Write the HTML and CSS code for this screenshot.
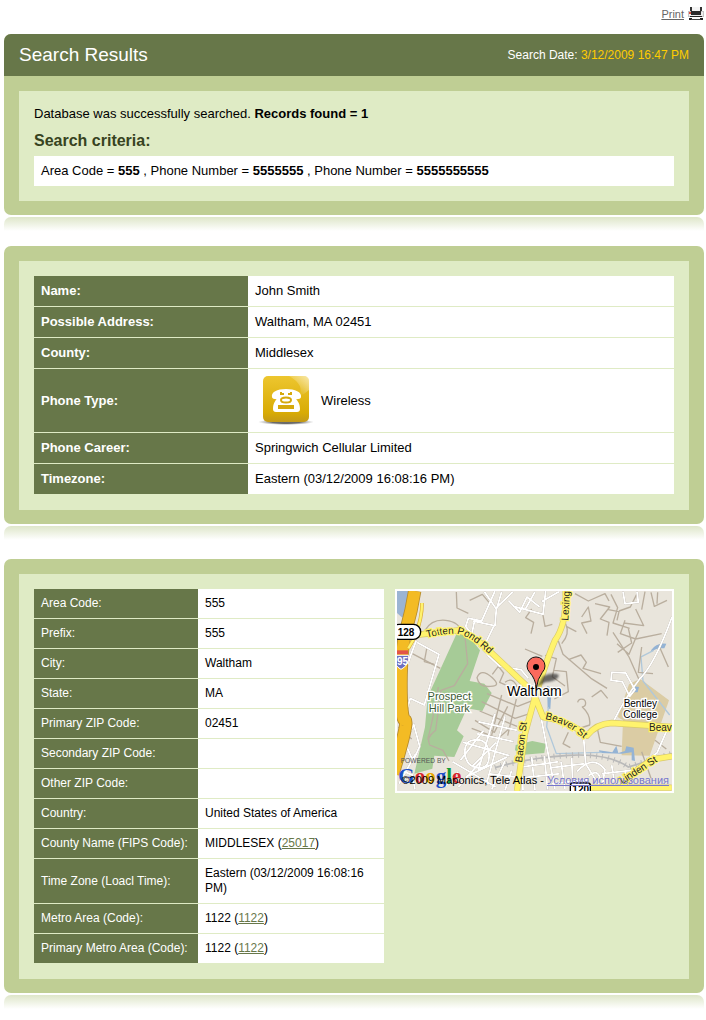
FILE: index.html
```
<!DOCTYPE html>
<html lang="en">

<head>
    <meta charset="utf-8" />
    <title>Search Results</title>
    <link rel="stylesheet" href="styles.css">
</head>

<body>
    <div class="print">
        <a href="#">Print</a>
        <svg class="print-icon" viewBox="0 0 16 14" aria-hidden="true">
            <path d="M2 0h2v4H2zM12 0h2v4h-2z" fill="#333" />
            <path d="M4 0h8v4H4z" fill="#f4f4f4" />
            <path d="M0 4h16v6H0z" fill="#c4c4c4" />
            <path d="M1 5h14v4H1z" fill="#eee" />
            <path d="M3 4h10v4H3z" fill="#2b2b2b" />
            <path d="M1 5h2v2H1z" fill="#e0503f" />
            <path d="M2 9h12v1H2zM1 11h3v2H1zM12 11h3v2h-3z" fill="#222" />
            <path d="M4 10h8v2H4z" fill="#fff" />
            <path d="M3 12h10v1H3z" fill="#444" />
        </svg>
    </div>

    <div class="panel">
        <div class="panel-head">
            <h1>Search Results</h1>
            <p>Search Date: <span>3/12/2009 16:47 PM</span></p>
        </div>
        <div class="panel-body">
            <p class="message">Database was successfully searched. <b>Records found = 1</b></p>
            <h2>Search criteria:</h2>
            <p class="criteria">Area Code = <b>555</b> , Phone Number = <b>5555555</b> , Phone Number = <b>5555555555</b></p>
        </div>
    </div>
    <div class="reflection"></div>

    <div class="panel">
        <div class="panel-body">
            <table class="person">
                <tr><th scope="row">Name:</th><td>John Smith</td></tr>
                <tr><th scope="row">Possible Address:</th><td>Waltham, MA 02451</td></tr>
                <tr><th scope="row">County:</th><td>Middlesex</td></tr>
                <tr>
                    <th scope="row">Phone Type:</th>
                    <td class="phone-cell">
                        <div class="phone-type">
                            <svg viewBox="0 0 60 51" aria-hidden="true">
                                <defs>
                                    <linearGradient id="gold" x1="0" y1="0" x2="0" y2="1">
                                        <stop offset="0" stop-color="#edc62f" />
                                        <stop offset="0.8" stop-color="#d8ab05" />
                                        <stop offset="1" stop-color="#c39a18" />
                                    </linearGradient>
                                    <linearGradient id="shine" x1="0" y1="1" x2="1" y2="0">
                                        <stop offset="0.3" stop-color="#fff" stop-opacity="0" />
                                        <stop offset="1" stop-color="#fff" stop-opacity="0.6" />
                                    </linearGradient>
                                    <radialGradient id="shadow">
                                        <stop offset="0.5" stop-color="#444" stop-opacity="0.8" />
                                        <stop offset="1" stop-color="#888" stop-opacity="0" />
                                    </radialGradient>
                                </defs>
                                <ellipse cx="31" cy="47" rx="28" ry="3" fill="url(#shadow)" />
                                <rect x="8" y="1" width="46" height="46" rx="5" fill="url(#gold)" />
                                <path d="M34 1h15q5 0 5 5v9Q50 19 44 21 50 10 34 1z" fill="url(#shine)" />
                                <path d="M17 22c-1-5 5-8 14-8s16 3 15 8c0 3-9 3-9 0v-1H26v1c0 3-9 3-9 0z" fill="#fff" />
                                <path d="M25 16h12v5c5 3 8 7 8 13q0 3-3 3H21q-3 0-3-3c0-6 3-10 7-13z" fill="#fff" />
                                <path d="M26 17v2h3M36 17v2h-3M24 31h14v2H24z" fill="none" stroke="#d6a90c" stroke-width="2" />
                                <ellipse cx="31" cy="25" rx="5" ry="2.5" fill="none" stroke="#d6a90c" stroke-width="2" />
                            </svg>
                            <span>Wireless</span>
                        </div>
                    </td>
                </tr>
                <tr><th scope="row">Phone Career:</th><td>Springwich Cellular Limited</td></tr>
                <tr><th scope="row">Timezone:</th><td>Eastern (03/12/2009 16:08:16 PM)</td></tr>
            </table>
        </div>
    </div>
    <div class="reflection"></div>

    <div class="panel location">
        <div class="panel-body columns">
            <table class="details">
                <tr><th scope="row">Area Code:</th><td>555</td></tr>
                <tr><th scope="row">Prefix:</th><td>555</td></tr>
                <tr><th scope="row">City:</th><td>Waltham</td></tr>
                <tr><th scope="row">State:</th><td>MA</td></tr>
                <tr><th scope="row">Primary ZIP Code:</th><td>02451</td></tr>
                <tr><th scope="row">Secondary ZIP Code:</th><td></td></tr>
                <tr><th scope="row">Other ZIP Code:</th><td></td></tr>
                <tr><th scope="row">Country:</th><td>United States of America</td></tr>
                <tr><th scope="row">County Name (FIPS Code):</th><td>MIDDLESEX (<a href="#">25017</a>)</td></tr>
                <tr><th scope="row">Time Zone (Loacl Time):</th><td>Eastern (03/12/2009 16:08:16 PM)</td></tr>
                <tr><th scope="row">Metro Area (Code):</th><td>1122 (<a href="#">1122</a>)</td></tr>
                <tr><th scope="row">Primary Metro Area (Code):</th><td>1122 (<a href="#">1122</a>)</td></tr>
            </table>
            <div class="map">
                <svg viewBox="6 12 825 600" role="img" aria-label="Map of Waltham">
                    <defs>
                        <path id="totten" d="M96 152Q150 138 190 141Q232 150 300 218" />
                        <path id="beaver" d="M450 396Q515 408 575 462" />
                        <filter id="soft"><feGaussianBlur stdDeviation="3" /></filter>
                    </defs>
                    <rect x="6" y="12" width="825" height="600" fill="#e9e5dc" />
                    <!-- parks, campus, water -->
                    <path d="M184 142L216 142L255 190L224 282L268 290L290 318L262 372L216 364L186 430L206 448L178 510L118 506L112 545L58 560L90 420L98 330L130 260z" fill="#a6cb97" />
                    <path d="M362 474L412 462L452 470L448 498L386 503L360 490z" fill="#a6cb97" />
                    <path d="M702 292L735 275L822 340L764 506L680 505L684 400L668 390z" fill="#dbcca4" />
                    <path d="M6 12H44L36 66L22 92L6 78z" fill="#9bb4d3" />
                    <path d="M768 190q16-24 46-20l-6 14q-24-2-38 10zM708 308q8-14 24-8l-4 16h-18zM456 296l14 6-4 64-8-2zM612 490l40 6 12-20 6 22 20-6 4-14 22 4 4 40-10-2v-24l-30 4-66-2z" fill="#94b3d4" />
                    <path d="M776 190L738 210L744 282L824 384M460 360L455 420L484 500L620 496" fill="none" stroke="#b0c8da" stroke-width="4" />
                    <!-- footpaths and residential streets -->
                    <g class="lanes">
                        <path d="M184 15l2 48 34 16M224 40l38-18 20 24M90 130q20-34 62-30t50 40M96 180l-8 44 30 8M210 150l8 80-40 66-40 14-16 120q-30 22-18 44l40 16 18 32" />
                        <path d="M246 272q12-30 46 0 28 26-6 26-34 4-40-26zM292 262l18-24 16 20-12 28 28 12M330 286q22-18 36 12l-26 8" />
                        <path d="M276 320l92 38 46-18M260 344l100 50 44-14M254 372l112 46M240 400l58 36 40-78M320 324l-30 120M364 336l-26 110M230 424l80 30 36-32" />
                        <path d="M540 20l40 22 50-22 12 22M600 50l44 10-28 36 26 10-6 40M560 90l20-30 8 42-28 6 16 32M648 22l20 40-14 46 50 16M640 68l32 6-6 26" />
                        <path d="M728 16l-22 44-34 12M722 66l24 50-60-8M750 14l-10 54M768 16l10 42 38-18M788 16l-2 34M690 100l-14 40 46 16 78-16M654 136l48 74 32 72M666 170l36 32 30-72M700 124l10 44-42 28M740 180l-10 76 44 4M792 176l28 64" />
                        <path d="M490 162l14 40 84 72 48 30M500 170q26-30 12-60M514 118l30 16M520 218l38-14 16 22-10 18 54 16M450 205l34 10-12 54 38 28M478 250l36 4 6 60-42 22M390 186l52 22" />
                        <path d="M548 346a12 12 0 1 1 14 14q26 24 22 54l-36 12M520 436l-16 34 22 12M606 420l10 46 64 12M590 330l28-20 20 24M780 460l34 26M740 494l28 80" />
                        <path d="M410 66l-18 26 24 14-8 34M442 74l8 44 22-6M130 300q-16 100-32 158M10 420l40 36M52 200l84 44" />
                    </g>
                    <!-- rail line -->
                    <path d="M300 542Q400 512 520 505T700 540L831 500" fill="none" stroke="#b9b9b9" stroke-width="5" />
                    <path d="M300 542Q400 512 520 505T700 540L831 500" fill="none" stroke="#b9b9b9" stroke-width="17" stroke-dasharray="3 15" />
                    <!-- minor roads -->
                    <g class="streets">
                        <path d="M300 12l-40 90-40-8-8 24 70 90 32 30 64 10 22 26M268 14l36 52-4 50-66-14M240 94l-10 50M298 114l-34 70M320 14l-16 54M354 14l-54 52M340 40l34 36 22-46 38 30M420 14l-30 54M452 12l-8 70-90-24M492 14l-52 30" />
                        <path d="M66 166l66 36-44 152-42-20-18 62M64 160l-18 48-34 106M56 412l-26 56 24 54 20-44zM62 500l-50 90" />
                        <path d="M831 90Q780 230 734 276Q692 330 656 402M650 256l42 2 28 50-16 20-22-44-34-4zM684 14l6 36 40-4-4-32" />
                        <path d="M436 380L480 606M566 454L572 530L620 608M568 530l-100 12M820 420l-34 78-30 20" />
                        <path d="M250 404l116 26M246 440l110 24M300 380l-50 170M330 388l-56 204M204 466l140 40M196 520l70-90M210 500q-4-40 32-42t40 42-32 42-40-42zM172 524l130 76M230 540l74-74M212 570l124-60M190 600l70-80M150 600l40-46M280 560l80 10" />
                        <path d="M290 608l40-86M330 610l20-60M380 512l4 98M410 510l10 100M448 506l10 102M380 540l110-16M382 572l112-12M498 524l12 82M530 512l4 98M470 590l110-12M546 554q48-54 84-6l-10 60M580 566q28-22 36 10M650 534l10 64M620 560l92-10M690 554l12 44M12 548l40 16 8 44" />
                    </g>
                    <!-- highway -->
                    <path d="M59 12Q50 70 34 126T18 290T30 400T-6 560" fill="none" stroke="#b48a2c" stroke-width="40" />
                    <path d="M59 12Q50 70 34 126T18 290T30 400T-6 560" fill="none" stroke="#f3bb24" stroke-width="35" />
                    <path d="M81 48Q82 90 60 150L40 184" fill="none" stroke="#ddae35" stroke-width="11" />
                    <path d="M81 48Q82 90 60 150L40 184" fill="none" stroke="#fff36d" stroke-width="7" />
                    <!-- main roads -->
                    <g class="roads-edge">
                        <path d="M60 144L190 130Q240 146 290 198L390 292L420 330M512 12Q516 110 480 160Q455 220 420 330L390 440L366 612M420 330L444 390Q520 400 576 446Q604 410 650 408L831 420M576 602L680 602Q720 542 780 516L831 508M580 602h250" />
                    </g>
                    <g class="roads">
                        <path d="M60 144L190 130Q240 146 290 198L390 292L420 330M512 12Q516 110 480 160Q455 220 420 330L390 440L366 612M420 330L444 390Q520 400 576 446Q604 410 650 408L831 420M576 602L680 602Q720 542 780 516L831 508M580 602h250" />
                    </g>
                    <g class="road-names">
                        <text><textPath href="#totten">Totten Pond Rd</textPath></text>
                        <text><textPath href="#beaver">Beaver St</textPath></text>
                        <text transform="translate(520 101) rotate(-87)">Lexingt</text>
                        <text transform="translate(381 527) rotate(-83)">Bacon St</text>
                        <text x="762" y="433">Beav</text>
                        <text transform="translate(682 592) rotate(-33)">Linden St</text>
                    </g>
                    <!-- route shields -->
                    <rect x="-10" y="112" width="87" height="45" rx="22" fill="#fff" stroke="#000" stroke-width="4" />
                    <text class="route" x="8" y="146">128</text>
                    <path d="M-6 190H39V202H-6z" fill="#e25549" />
                    <path d="M-6 205H41Q44 234 18 247Q-4 236 -6 205z" fill="#6c6fc0" stroke="#fff" stroke-width="3" />
                    <text class="interstate" x="6" y="233">95</text>
                    <rect x="526" y="588" width="60" height="45" rx="8" fill="#fff" stroke="#000" stroke-width="4" />
                    <text class="route" x="532" y="618">120</text>
                    <g class="places">
                        <text class="park" x="163" y="339">Prospect</text>
                        <text class="park" x="163" y="374">Hill Park</text>
                        <text x="736" y="361">Bentley</text>
                        <text x="736" y="393">College</text>
                        <text class="town" x="418" y="327">Waltham</text>
                    </g>
                    <!-- marker -->
                    <path d="M424 302L444 268Q470 254 492 264Q488 284 450 286z" fill="#222" opacity="0.65" filter="url(#soft)" />
                    <path d="M424 304Q422 276 404 256A27 27 0 1 1 442 256Q427 276 424 304z" fill="#fb6a5d" stroke="#111" stroke-width="3" />
                    <circle cx="423" cy="240" r="9" fill="#000" />
                    <text class="powered" x="17" y="529">POWERED BY</text>
                    <text class="logo" x="10" y="587"><tspan class="blue">G</tspan><tspan class="red">o</tspan><tspan class="yellow">o</tspan><tspan class="blue">g</tspan><tspan class="green">l</tspan><tspan class="red">e</tspan></text>
                </svg>
                <p class="copyright">©2009 Maponics, Tele Atlas - <a href="#">Условия использования</a></p>
            </div>
        </div>
    </div>
    <div class="reflection"></div>
</body>

</html>
```
FILE: styles.css
```
* {
    margin: 0;
    padding: 0;
    box-sizing: border-box;
}

body {
    padding: 0 2px 0 4px;
    background: #fff;
    color: #000;
    font: 13px/16px Arial, "Liberation Sans", sans-serif;
}

.print {
    display: flex;
    justify-content: flex-end;
    align-items: center;
    gap: 4px;
    height: 34px;
    padding-bottom: 7px;
    font-size: 11px;
}

.print a {
    color: #666;
}

.print-icon {
    width: 16px;
    height: 14px;
}

.panel {
    padding: 15px 15px 14px;
    border-radius: 7px;
    background: #bfce94;
}

.panel-head {
    display: flex;
    justify-content: space-between;
    align-items: center;
    height: 42px;
    margin: -15px -15px 15px;
    padding: 0 15px;
    border-radius: 7px 7px 0 0;
    background: #677749;
    color: #fff;
}

.panel-head h1 {
    font-size: 19px;
    font-weight: normal;
}

.panel-head p {
    font-size: 12px;
}

.panel-head span {
    color: #fc0;
}

.panel-body {
    padding: 15px;
    background: #dfebc5;
}

.panel-body h2 {
    margin: 9px 0 5px;
    color: #374321;
    font-size: 16px;
    line-height: 20px;
}

.criteria {
    padding: 7px;
    background: #fff;
}

.reflection {
    height: 14px;
    margin: 2px 0 15px;
    border-radius: 7px 7px 0 0;
    background: linear-gradient(#dee6c9, #fff);
}

.location {
    margin-top: 19px;
}

table {
    width: 100%;
    border-spacing: 0;
}

th,
td {
    padding: 7px;
    border-bottom: 1px solid #dfebc5;
    text-align: left;
}

th {
    background: #677749;
    color: #fff;
}

td {
    background: #fff;
}

.person th {
    width: 214px;
}

.person .phone-cell {
    padding: 6px 7px;
}

.phone-type {
    display: flex;
    align-items: center;
    gap: 6px;
}

.phone-type svg {
    width: 60px;
    height: 51px;
}

.columns {
    display: flex;
    align-items: flex-start;
    gap: 11px;
}

.details {
    flex: 0 1 350px;
    font-size: 12px;
    line-height: 15px;
}

.details th {
    width: 164px;
    font-weight: normal;
    white-space: nowrap;
}

.details a {
    color: #677749;
}

.map {
    position: relative;
    flex: 0 1 279px;
    border: 2px solid #fff;
    overflow: hidden;
}

.map svg {
    display: block;
    width: 100%;
}

.lanes,
.streets,
.roads-edge,
.roads {
    fill: none;
    stroke-linejoin: round;
}

.lanes {
    stroke: #b9ae9e;
    stroke-width: 4;
}

.streets {
    stroke: #fff;
    stroke-width: 6;
    filter: drop-shadow(0 0 1px #8f8576);
}

.roads-edge {
    stroke: #d9ca6a;
    stroke-width: 19;
}

.roads {
    stroke: #fff36d;
    stroke-width: 15;
}

.map text {
    font-family: Arial, "Liberation Sans", sans-serif;
}

.road-names text {
    fill: #222;
    stroke: #fff36d;
    stroke-width: 8;
    paint-order: stroke;
    font-size: 30px;
}

.route,
.interstate {
    font-size: 30px;
    font-weight: bold;
}

.interstate {
    fill: #fff;
}

.places text {
    stroke: #fff;
    stroke-width: 8;
    paint-order: stroke;
    font-size: 30px;
    text-anchor: middle;
}

.places .park {
    fill: #3c5c35;
    font-size: 33px;
}

.places .town {
    font-size: 42px;
}

.map .powered {
    fill: #555;
    font-size: 20px;
}

.map .logo {
    font-family: "Liberation Serif", serif;
    font-size: 63px;
    font-weight: bold;
}

.blue {
    fill: #1c50c8;
}

.red {
    fill: #d8252c;
}

.yellow {
    fill: #eaa800;
}

.green {
    fill: #149a38;
}

.copyright {
    position: absolute;
    right: 3px;
    bottom: 3px;
    font-size: 11px;
    line-height: 15px;
    white-space: nowrap;
}

.copyright a {
    color: #7777cc;
}
```
